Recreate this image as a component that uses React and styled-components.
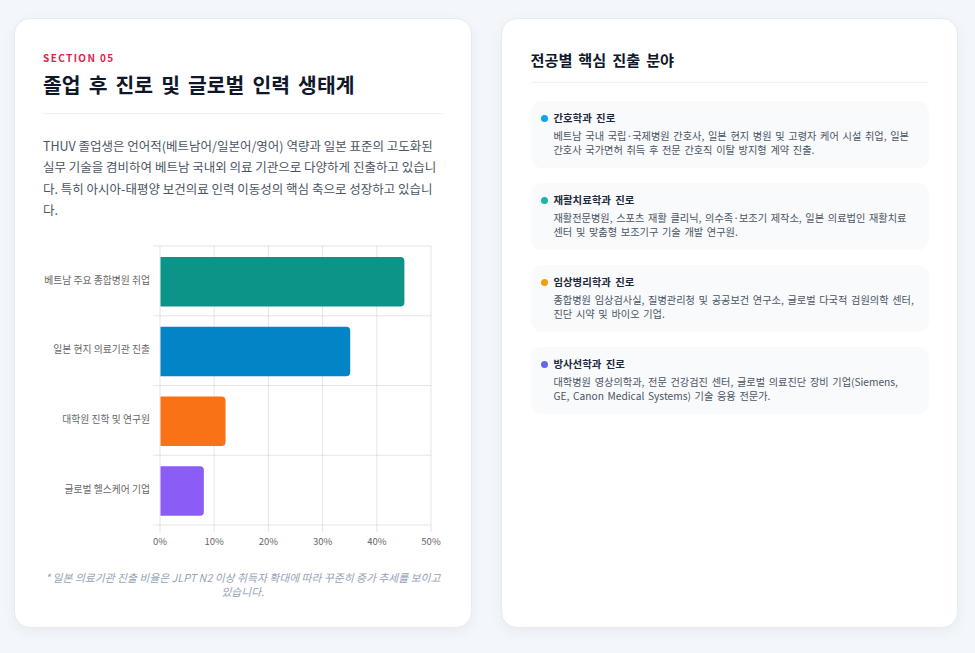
import styled, { createGlobalStyle } from "styled-components";

const GlobalStyle = createGlobalStyle`
  * {
    box-sizing: border-box;
  }

  body {
    margin: 0;
    background: #f3f6fa;
    font-family: "Noto Sans CJK KR", "Noto Sans", sans-serif;
    color: #0f172a;
  }
`;

const Page = styled.main`
  display: grid;
  grid-template-columns: 1fr 1fr;
  gap: 29px;
  padding: 18px 17px 27px 14px;
`;

const Card = styled.section`
  background: #fff;
  border: 1px solid #e6ebf1;
  border-radius: 16px;
  box-shadow: 0 4px 14px rgba(15, 23, 42, 0.05);
  padding: ${(p) => (p.$side ? "29px 28px 28px 29px" : "32px 28px 29px 28px")};
  display: flex;
  flex-direction: column;
`;

const SectionLabel = styled.p`
  margin: 0;
  font-size: 10px;
  line-height: 14px;
  font-weight: 700;
  letter-spacing: 1.4px;
  color: #e11d48;
`;

const Title = styled.h2`
  margin: 4px 0 0;
  font-size: 20.4px;
  line-height: 30px;
  font-weight: 700;
  word-spacing: 3.5px;
  color: #0f172a;
`;

const SideTitle = styled.h3`
  margin: 0;
  font-size: 15.2px;
  line-height: 22px;
  font-weight: 700;
  word-spacing: 2.5px;
  color: #0f172a;
`;

const Divider = styled.hr`
  border: 0;
  height: 1px;
  background: #edf1f6;
  margin: ${(p) => p.$space || "14px 0 21px"};
`;

const Lead = styled.p`
  margin: 0;
  font-size: 12.5px;
  line-height: 21.3px;
  color: #4b5563;
`;

const ChartWrap = styled.div`
  margin-top: 20px;
  height: 310px;

  svg {
    display: block;
  }

  text {
    font-family: "Noto Sans CJK KR", "Noto Sans", sans-serif;
    font-size: 9.5px;
    fill: #666;
  }

  .category {
    font-size: 9.8px;
  }
`;

const Footnote = styled.p`
  margin: 20px 0 0;
  font-size: 10.8px;
  line-height: 14px;
  font-style: italic;
  text-align: center;
  color: #94a3b8;
`;

const CareerList = styled.div`
  display: flex;
  flex-direction: column;
  gap: 15px;
`;

const CareerItem = styled.div`
  background: #f8fafc;
  border-radius: 11px;
  padding: 9px 12px 11px 10px;
`;

const ItemHead = styled.div`
  display: flex;
  align-items: center;
  gap: 6px;
`;

const Dot = styled.span`
  width: 7px;
  height: 7px;
  border-radius: 50%;
  background: ${(p) => p.$color};
  flex-shrink: 0;
`;

const ItemTitle = styled.h4`
  margin: 0;
  font-size: 10.4px;
  line-height: 16px;
  font-weight: 700;
  word-spacing: 2px;
  color: #1e293b;
`;

const ItemDesc = styled.p`
  margin: 3px 0 0 13px;
  font-size: 10.2px;
  line-height: 14px;
  word-spacing: 1.4px;
  color: #4b5563;
`;

const outcomes = [
  { label: "베트남 주요 종합병원 취업", value: 45, color: "#0d9488" },
  { label: "일본 현지 의료기관 진출", value: 35, color: "#0284c7" },
  { label: "대학원 진학 및 연구원", value: 12, color: "#f97316" },
  { label: "글로벌 헬스케어 기업", value: 8, color: "#8b5cf6" },
];

const careers = [
  {
    title: "간호학과 진로",
    color: "#0ea5e9",
    desc: "베트남 국내 국립·국제병원 간호사, 일본 현지 병원 및 고령자 케어 시설 취업, 일본 간호사 국가면허 취득 후 전문 간호직 이탈 방지형 계약 진출.",
  },
  {
    title: "재활치료학과 진로",
    color: "#14b8a6",
    desc: "재활전문병원, 스포츠 재활 클리닉, 의수족·보조기 제작소, 일본 의료법인 재활치료 센터 및 맞춤형 보조기구 기술 개발 연구원.",
  },
  {
    title: "임상병리학과 진로",
    color: "#f59e0b",
    desc: "종합병원 임상검사실, 질병관리청 및 공공보건 연구소, 글로벌 다국적 검원의학 센터, 진단 시약 및 바이오 기업.",
  },
  {
    title: "방사선학과 진로",
    color: "#6366f1",
    desc: "대학병원 영상의학과, 전문 건강검진 센터, 글로벌 의료진단 장비 기업(Siemens, GE, Canon Medical Systems) 기술 응용 전문가.",
  },
];

// horizontal bar chart, drawn like the chart.js canvas it came from
function OutcomeChart() {
  const left = 117;
  const top = 6;
  const step = 54.2; // px per 10%
  const row = 69.75;
  const bottom = top + row * outcomes.length;
  const grid = "rgba(0,0,0,0.1)";

  return (
    <ChartWrap>
      <svg width="399" height="310" viewBox="0 0 399 310">
        {[0, 1, 2, 3, 4, 5].map((i) => (
          <line
            key={"v" + i}
            x1={left + i * step}
            x2={left + i * step}
            y1={top}
            y2={bottom + 7}
            stroke={grid}
            strokeWidth="1"
          />
        ))}
        {[0, 1, 2, 3, 4].map((j) => (
          <line
            key={"h" + j}
            x1={left - 7}
            x2={left + 5 * step}
            y1={top + j * row}
            y2={top + j * row}
            stroke={grid}
            strokeWidth="1"
          />
        ))}
        {outcomes.map((o, j) => {
          const y = top + j * row + 11;
          const h = 49.5;
          const w = (o.value / 10) * step;
          const r = 4;
          const x = left + 0.5;
          return (
            <g key={o.label}>
              <path
                d={`M${x} ${y} H${x + w - r} Q${x + w} ${y} ${x + w} ${y + r} V${y + h - r} Q${x + w} ${y + h} ${x + w - r} ${y + h} H${x} Z`}
                fill={o.color}
              />
              <text
                className="category"
                x={left - 10}
                y={top + j * row + row / 2}
                textAnchor="end"
                dominantBaseline="middle"
              >
                {o.label}
              </text>
            </g>
          );
        })}
        {[0, 1, 2, 3, 4, 5].map((i) => (
          <text
            key={"t" + i}
            x={left + i * step}
            y={bottom + 17}
            textAnchor="middle"
            dominantBaseline="middle"
          >
            {i * 10}%
          </text>
        ))}
      </svg>
    </ChartWrap>
  );
}

export default function App() {
  return (
    <>
      <GlobalStyle />
      <Page>
        <Card>
          <SectionLabel>SECTION 05</SectionLabel>
          <Title>졸업 후 진로 및 글로벌 인력 생태계</Title>
          <Divider />
          <Lead>
            THUV 졸업생은 언어적(베트남어/일본어/영어) 역량과 일본 표준의 고도화된
            실무 기술을 겸비하여 베트남 국내외 의료 기관으로 다양하게 진출하고
            있습니다. 특히 아시아-태평양 보건의료 인력 이동성의 핵심 축으로
            성장하고 있습니다.
          </Lead>
          <OutcomeChart />
          <Footnote>
            * 일본 의료기관 진출 비율은 JLPT N2 이상 취득자 확대에 따라 꾸준히 증가
            추세를 보이고 있습니다.
          </Footnote>
        </Card>

        <Card $side>
          <SideTitle>전공별 핵심 진출 분야</SideTitle>
          <Divider $space="12px 0 18px" />
          <CareerList>
            {careers.map((c) => (
              <CareerItem key={c.title}>
                <ItemHead>
                  <Dot $color={c.color} />
                  <ItemTitle>{c.title}</ItemTitle>
                </ItemHead>
                <ItemDesc>{c.desc}</ItemDesc>
              </CareerItem>
            ))}
          </CareerList>
        </Card>
      </Page>
    </>
  );
}
